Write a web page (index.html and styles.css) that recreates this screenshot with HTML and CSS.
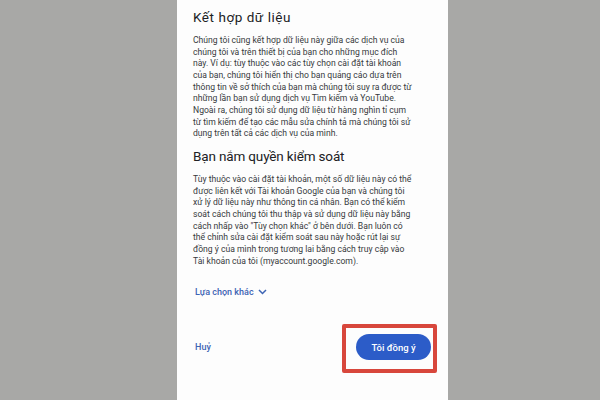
FILE: index.html
```html
<!DOCTYPE html>
<html lang="vi">
<head>
<meta charset="utf-8">
<link rel="stylesheet" href="styles.css">
</head>
<body>
<div class="stage">
  <div class="panel">
    <h2 class="title title1">Kết hợp dữ liệu</h2>
    <p class="text">Chúng tôi cũng kết hợp dữ liệu này giữa các dịch vụ của<br>chúng tôi và trên thiết bị của bạn cho những mục đích<br>này. Ví dụ: tùy thuộc vào các tùy chọn cài đặt tài khoản<br>của bạn, chúng tôi hiển thị cho bạn quảng cáo dựa trên<br>thông tin về sở thích của bạn mà chúng tôi suy ra được từ<br>những lần bạn sử dụng dịch vụ Tìm kiếm và YouTube.<br>Ngoài ra, chúng tôi sử dụng dữ liệu từ hàng nghìn tỉ cụm<br>từ tìm kiếm để tạo các mẫu sửa chính tả mà chúng tôi sử<br>dụng trên tất cả các dịch vụ của mình.</p>
    <h2 class="title title2">Bạn nắm quyền kiểm soát</h2>
    <p class="text">Tùy thuộc vào cài đặt tài khoản, một số dữ liệu này có thể<br>được liên kết với Tài khoản Google của bạn và chúng tôi<br>xử lý dữ liệu này như thông tin cá nhân. Bạn có thể kiểm<br>soát cách chúng tôi thu thập và sử dụng dữ liệu này bằng<br>cách nhấp vào "Tùy chọn khác" ở bên dưới. Bạn luôn có<br>thể chỉnh sửa cài đặt kiểm soát sau này hoặc rút lại sự<br>đồng ý của mình trong tương lai bằng cách truy cập vào<br>Tài khoản của tôi (myaccount.google.com).</p>
    <div class="more">
      <span>Lựa chọn khác</span>
      <svg class="chev" width="9" height="6" viewBox="0 0 9 6"><path d="M1 1l3.5 3.5L8 1" fill="none" stroke="currentColor" stroke-width="1.5"/></svg>
    </div>
    <div class="footer">
      <span class="cancel">Huỷ</span>
      <span class="agree">Tôi đồng ý<span class="mark"></span></span>
    </div>
  </div>
</div>
</body>
</html>
```
FILE: styles.css
```css
html, body {
  margin: 0;
  padding: 0;
}
body {
  background: #a8a8a6;
  width: 600px;
  height: 400px;
  overflow: hidden;
  font-family: Roboto, "Noto Sans", sans-serif;
}
.stage {
  display: flex;
  height: 400px;
}
.panel {
  margin-left: 177px;
  width: 271px;
  box-sizing: border-box;
  background: #fdfdfd;
  padding: 8px 17px 0 16px;
  display: flex;
  flex-direction: column;
}
.title {
  margin: 0;
  font-weight: 400;
  font-size: 13.5px;
  line-height: 18px;
  color: #202124;
}
.title1 {
  letter-spacing: 0.55px;
}
.title2 {
  margin-top: 7px;
  letter-spacing: -0.15px;
}
.text {
  margin: 9px 0 0;
  font-size: 8.6px;
  line-height: 11.67px;
  color: #36393c;
  white-space: nowrap;
}
.more {
  margin-top: 18px;
  margin-left: 2px;
  display: flex;
  align-items: center;
  gap: 4px;
  font-size: 9px;
  line-height: 14px;
  color: #3d64b4;
  font-weight: 500;
}
.footer {
  margin-top: 35px;
  display: flex;
  justify-content: space-between;
  align-items: center;
}
.cancel {
  margin-left: 2px;
  font-size: 9px;
  font-weight: 500;
  color: #3d64b4;
}
.agree {
  position: relative;
  width: 75px;
  height: 26px;
  border-radius: 13px;
  background: #2c5cc8;
  color: #fff;
  font-size: 9.5px;
  font-weight: 500;
  display: flex;
  align-items: center;
  justify-content: center;
}
.mark {
  position: absolute;
  left: -14px;
  right: -6px;
  top: -10px;
  bottom: -13px;
  border: 4px solid #d8473c;
  border-radius: 2px;
}
```
